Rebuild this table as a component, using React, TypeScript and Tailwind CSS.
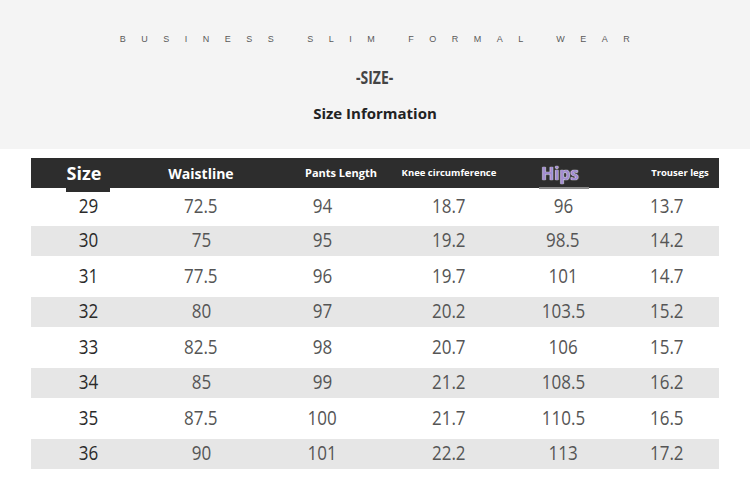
const rows = [
  ['29', '72.5', '94', '18.7', '96', '13.7'],
  ['30', '75', '95', '19.2', '98.5', '14.2'],
  ['31', '77.5', '96', '19.7', '101', '14.7'],
  ['32', '80', '97', '20.2', '103.5', '15.2'],
  ['33', '82.5', '98', '20.7', '106', '15.7'],
  ['34', '85', '99', '21.2', '108.5', '16.2'],
  ['35', '87.5', '100', '21.7', '110.5', '16.5'],
  ['36', '90', '101', '22.2', '113', '17.2'],
];

const cols = 'grid grid-cols-[114px_112px_130px_124px_104px_104px]';

function Row({ cells, idx }: { cells: string[]; idx: number }) {
  const gray = idx % 2 === 1;
  const h = idx === 0 ? 'h-[38px]' : gray ? 'h-[30px]' : 'h-[41px]';
  return (
    <div className={`${cols} ${h} items-center ${gray ? 'bg-[#e6e6e6]' : 'bg-white'}`}>
      {cells.map((c, i) => (
        <div key={i} className="text-center">
          <span
            className={`inline-block scale-x-[0.85] text-[20px] leading-none ${i === 0 ? 'text-[#2a2a2a]' : 'text-[#555]'}`}
          >
            {c}
          </span>
        </div>
      ))}
    </div>
  );
}

export default function App() {
  return (
    <div className="w-[750px] h-[485px] bg-white overflow-hidden font-['Open_Sans',sans-serif]">
      <div className="h-[149px] bg-[#f4f4f4] flex flex-col items-center pt-[34px]">
        <div className="text-[9px] leading-[10px] tracking-[15.5px] pl-[15px] text-[#5a5a5a] font-['Liberation_Sans',sans-serif]">
          BUSINESS SLIM FORMAL WEAR
        </div>
        <div className="mt-[25px] text-[17px] leading-[18px] font-bold text-[#444] scale-x-[0.82]">-SIZE-</div>
        <div className="mt-[17px] text-[15px] leading-[18px] font-bold text-[#222]">
          Size Information
        </div>
      </div>

      <div className="mt-[9px] ml-[31px] w-[688px]">
        <div className={`${cols} h-[30px] items-center bg-[#2d2d2d] text-white font-bold`}>
          <div className="relative h-full flex items-center justify-center pr-[8px]">
            <span className="text-[18px] leading-none">Size</span>
            <div className="absolute left-[35px] bottom-[-4px] w-[44px] h-[4px] bg-[#2d2d2d]" />
          </div>
          <div className="text-center text-[14px]">Waistline</div>
          <div className="text-center text-[11px] pl-[38px]">Pants Length</div>
          <div className="text-center text-[9.5px]">Knee circumference</div>
          <div className="relative h-full flex items-center justify-center pr-[6px]">
            <span className="text-[17px] leading-none text-[#a18ed0] [text-shadow:0_0_1px_#fff,0_0_1px_#fff]">Hips</span>
            <div className="absolute left-[28px] bottom-[-1px] w-[50px] h-[2px] bg-[#8a8a8a]" />
          </div>
          <div className="text-center text-[9.5px] pl-[26px]">Trouser legs</div>
        </div>
        {rows.map((r, i) => (
          <Row key={i} cells={r} idx={i} />
        ))}
      </div>
    </div>
  );
}
